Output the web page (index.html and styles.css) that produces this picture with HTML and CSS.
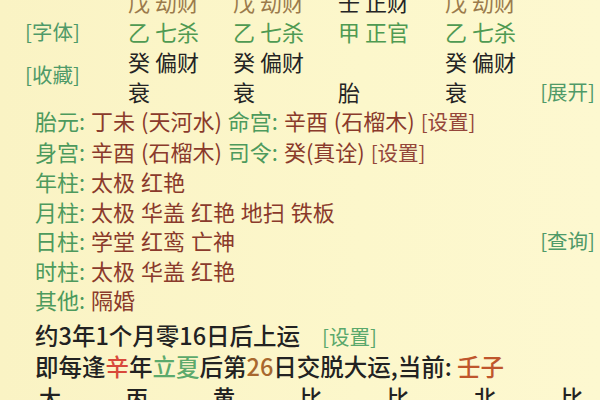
FILE: index.html
```html
<!DOCTYPE html>
<html lang="zh">
<head>
<meta charset="utf-8">
<link rel="stylesheet" href="styles.css">
</head>
<body>
<div class="page">
  <div class="pillars">
    <div class="cell c1 r0 khaki">戊 劫财</div>
    <div class="cell c2 r0 khaki">戊 劫财</div>
    <div class="cell c3 r0 dark">壬 正财</div>
    <div class="cell c4 r0 khaki">戊 劫财</div>

    <div class="side r1">[字体]</div>
    <div class="cell c1 r1 green">乙 七杀</div>
    <div class="cell c2 r1 green">乙 七杀</div>
    <div class="cell c3 r1 green">甲 正官</div>
    <div class="cell c4 r1 green">乙 七杀</div>

    <div class="side r23">[收藏]</div>
    <div class="cell c1 r2 dark">癸 偏财</div>
    <div class="cell c2 r2 dark">癸 偏财</div>
    <div class="cell c4 r2 dark">癸 偏财</div>

    <div class="cell c1 r3 dark">衰</div>
    <div class="cell c2 r3 dark">衰</div>
    <div class="cell c3 r3 dark">胎</div>
    <div class="cell c4 r3 dark">衰</div>
    <div class="side right r3">[展开]</div>
  </div>

  <div class="info">
    <div class="line"><span><span class="lab">胎元:</span> <span class="val">丁未 (天河水)</span> <span class="lab">命宫:</span> <span class="val">辛酉 (石榴木)</span> <span class="set">[设置]</span></span></div>
    <div class="line"><span><span class="lab">身宫:</span> <span class="val">辛酉 (石榴木)</span> <span class="lab">司令:</span> <span class="val">癸(真诠)</span> <span class="set">[设置]</span></span></div>
    <div class="line"><span><span class="lab">年柱:</span> <span class="val">太极 红艳</span></span></div>
    <div class="line"><span><span class="lab">月柱:</span> <span class="val">太极 华盖 红艳 地扫 铁板</span></span></div>
    <div class="line"><span><span class="lab">日柱:</span> <span class="val">学堂 红鸾 亡神</span></span><span class="link">[查询]</span></div>
    <div class="line"><span><span class="lab">时柱:</span> <span class="val">太极 华盖 红艳</span></span></div>
    <div class="line"><span><span class="lab">其他:</span> <span class="val">隔婚</span></span></div>
  </div>

  <div class="yun">
    <div class="yline">约3年1个月零16日后上运<span class="gset">[设置]</span></div>
    <div class="yline">即每逢<span class="red">辛</span>年<span class="lgreen">立夏</span>后第<span class="orange">26</span>日交脱大运,当前: <span class="rust">壬子</span></div>
    <div class="dayun">
      <span>大</span><span>丙</span><span>黄</span><span>比</span><span>比</span><span>北</span><span>比</span>
    </div>
  </div>
</div>
</body>
</html>
```

FILE: styles.css
```css
html, body {
  margin: 0;
  padding: 0;
}
body {
  width: 600px;
  height: 400px;
  overflow: hidden;
  background: linear-gradient(90deg, #faf3c4 0%, #fcf7cb 60%, #fdf8d0 100%);
  font-family: "Noto Sans CJK SC", "Noto Sans", sans-serif;
  font-size: 22px;
  font-weight: 400;
  color: #222;
}
.page {
  margin-top: -14px;
}
.pillars {
  display: grid;
  grid-template-columns: 103px 105px 105px 107px 1fr auto;
  grid-template-rows: repeat(4, 30px);
  padding-left: 25px;
  padding-right: 5px;
  align-items: center;
  white-space: nowrap;
}
.cell { line-height: 30px; }
.c1 { grid-column: 2; }
.c2 { grid-column: 3; }
.c3 { grid-column: 4; }
.c4 { grid-column: 5; }
.r0 { grid-row: 1; }
.r1 { grid-row: 2; }
.r2 { grid-row: 3; }
.r3 { grid-row: 4; }
.r23 { grid-row: 3 / 5; }
.side {
  grid-column: 1;
  font-size: 20.5px;
  color: #4f9a68;
}
.side.r1 { margin-bottom: 1px; }
.side.r23 { margin-bottom: 4px; }
.side.right { grid-column: 6; }
.khaki { color: #9b7b4c; }
.dark { color: #242424; }
.green { color: #4f9a52; }

.info {
  padding-left: 35px;
  padding-right: 5px;
  line-height: 29.5px;
  word-spacing: 1px;
}
.line {
  display: flex;
  justify-content: space-between;
  white-space: nowrap;
}
.lab { color: #4d9a5d; }
.val { color: #8a3a2b; }
.set { color: #94463a; font-size: 20.5px; }
.link { color: #4f9a68; font-size: 20.5px; }

.yun {
  margin-top: 5.5px;
  padding-left: 35px;
  line-height: 30px;
  font-size: 23.5px;
  font-weight: 500;
  white-space: nowrap;
}
.gset { color: #5aa86c; font-size: 20.5px; font-weight: 400; margin-left: 22px; }
.red { color: #d8483a; }
.lgreen { color: #5caa6c; }
.orange { color: #a8682e; }
.rust { color: #bf562c; }
.dayun {
  display: grid;
  grid-template-columns: repeat(7, 87px);
  padding-left: 4px;
  font-size: 22px;
  line-height: 30px;
}
```
